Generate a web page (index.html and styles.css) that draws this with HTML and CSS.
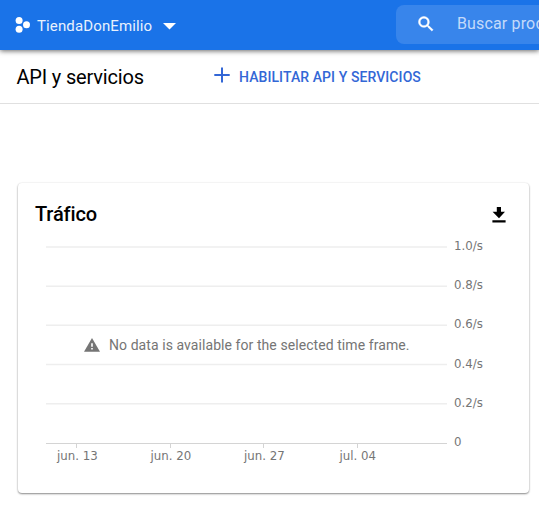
FILE: index.html
```
<!DOCTYPE html>
<html lang="es">
<head>
<meta charset="utf-8">
<title>API y servicios</title>
<link rel="stylesheet" href="styles.css">
</head>
<body>
<header class="topbar">
  <button class="project">
    <svg class="project-icon" width="16" height="18" viewBox="0 0 16 18" fill="#fff"><circle cx="4.1" cy="4.4" r="3.5"/><circle cx="11.5" cy="8.8" r="3.5"/><circle cx="4.1" cy="13.3" r="3.5"/></svg>
    <span>TiendaDonEmilio</span>
    <svg class="caret" width="13" height="7" viewBox="0 0 13 7"><path d="M0 0h13L6.500 6.500z" fill="#fff"/></svg>
  </button>
  <div class="search">
    <svg width="20" height="20" viewBox="0 0 24 24"><path fill="#fff" stroke="#fff" stroke-width=".6" d="M15.500 14h-.79l-.28-.27A6.470 6.470 0 0 0 16 9.500 6.500 6.500 0 1 0 9.500 16c1.610 0 3.090-.59 4.230-1.570l.27.28v.79l5 4.990L20.490 19l-4.990-5zm-6 0C7.010 14 5 11.990 5 9.500S7.010 5 9.500 5 14 7.010 14 9.500 11.990 14 9.500 14z"/></svg>
    <span>Buscar productos</span>
  </div>
</header>
<div class="actionbar">
  <h1>API y servicios</h1>
  <button class="enable">
    <svg width="16" height="16" viewBox="0 0 16 16"><path d="M8 .5v15M.3 8h15.400" stroke="#3367d6" stroke-width="2"/></svg>
    <span>HABILITAR API Y SERVICIOS</span>
  </button>
</div>
<main>
  <section class="card">
    <div class="card-head">
      <h2>Tráfico</h2>
      <svg width="14" height="16" viewBox="0 0 14 16"><path d="M4.800 0h4.200v4.700h4L7 11.300.6 4.700h4.200zM.4 13.300h13.200v2.200H.4z"/></svg>
    </div>
    <div class="chart">
      <svg class="plot" width="511" height="240" viewBox="18 236 511 240">
        <g class="grid"><path d="M46 247h401M46 286.200h401M46 325.200h401M46 364.500h401M46 403.700h401"/></g>
        <path class="axis" d="M46 443.500h401M76.500 443v5M170.500 443v5M263.500 443v5M357.500 443v5"/>
        <g class="labels">
          <text x="454" y="250">1.0/s</text>
          <text x="454" y="289">0.8/s</text>
          <text x="454" y="328">0.6/s</text>
          <text x="454" y="368">0.4/s</text>
          <text x="454" y="407">0.2/s</text>
          <text x="454" y="446">0</text>
        </g>
        <g class="labels dates">
          <text x="77.300" y="460">jun. 13</text>
          <text x="170.800" y="460">jun. 20</text>
          <text x="264.300" y="460">jun. 27</text>
          <text x="357.700" y="460">jul. 04</text>
        </g>
      </svg>
      <div class="empty">
        <svg width="16" height="14" viewBox="0 0 16 14"><path d="M8 0l8 13.700H0z" fill="#757575"/><path d="M7.200 5.200h1.600v3.600H7.200zM7.200 10h1.600v1.600H7.200z" fill="#fff"/></svg>
        <span>No data is available for the selected time frame.</span>
      </div>
    </div>
  </section>
</main>
</body>
</html>
```

FILE: styles.css
```
* { box-sizing: border-box; }
body {
  margin: 0;
  height: 506px;
  overflow: hidden;
  background: #fff;
  font-family: Roboto, sans-serif;
}
button {
  padding: 0;
  border: 0;
  background: none;
  font: inherit;
  color: inherit;
}
h1, h2 { margin: 0; color: #000; }
.topbar {
  position: relative;
  display: flex;
  justify-content: space-between;
  height: 50px;
  padding-top: 5px;
  background: #1a73e8;
  box-shadow: 0 1px 5px rgba(0, 0, 0, .6);
}
.project {
  display: flex;
  align-items: center;
  height: 42px;
  padding-left: 15px;
  color: #e8f1fd;
  font-size: 15px;
  letter-spacing: .13px;
  white-space: nowrap;
}
.project-icon { margin: -2px 6px 0 0; }
.caret { margin-left: 11px; }
.search {
  display: flex;
  align-items: center;
  width: 143px;
  height: 39px;
  padding: 0 0 2px 20px;
  gap: 21px;
  border-radius: 8px 0 0 8px;
  background: #3885eb;
  color: #c3dafa;
  font-size: 16px;
  letter-spacing: .15px;
  white-space: nowrap;
  overflow: hidden;
}
.search svg { flex: none; }
.actionbar {
  display: flex;
  align-items: center;
  height: 54px;
  padding-left: 16.5px;
  border-bottom: 1px solid #e0e0e0;
}
.actionbar h1 {
  width: 197.5px;
  font-size: 20px;
  font-weight: 400;
  letter-spacing: -.18px;
}
.enable {
  display: flex;
  align-items: center;
  gap: 9px;
  color: #3367d6;
  font-size: 14px;
  font-weight: 500;
  letter-spacing: .08px;
}
.enable svg { margin-top: -4px; }
main { padding: 79px 10px 0 18px; }
.card {
  height: 310px;
  border-radius: 4px;
  background: #fff;
  box-shadow: 0 1px 2px rgba(0, 0, 0, .45), 0 0 2px rgba(0, 0, 0, .08);
}
.card-head {
  display: flex;
  align-items: center;
  justify-content: space-between;
  height: 53px;
  padding: 8px 23px 0 17px;
}
.card-head h2 { font-size: 20px; font-weight: 500; letter-spacing: -.14px; }
.card-head svg { margin-top: 2px; }
.chart { display: grid; }
.plot, .empty { grid-area: 1 / 1; }
.grid { fill: none; stroke: #eee; stroke-width: 1.5; }
.axis { fill: none; stroke: #d4d4d4; stroke-width: 1; }
.labels { fill: #757575; font: 11.8px "DejaVu Sans", sans-serif; }
.dates { text-anchor: middle; }
.empty {
  display: flex;
  align-items: center;
  align-self: start;
  gap: 9px;
  margin-top: 99px;
  padding-left: 66px;
  height: 20px;
  color: #757575;
  font-size: 14px;
  letter-spacing: .07px;
}
```
